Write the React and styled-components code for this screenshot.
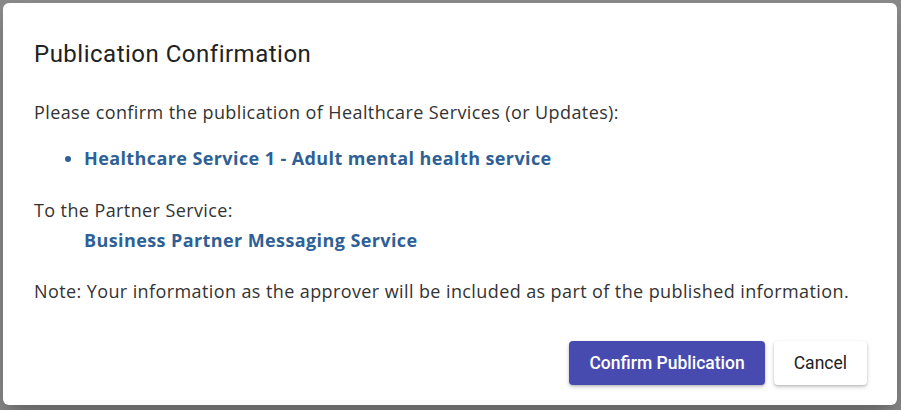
import React from "react";
import styled, { createGlobalStyle } from "styled-components";

const GlobalStyle = createGlobalStyle`
  html, body { margin: 0; padding: 0; }
  body { background: #8a8a8a; width: 901px; height: 410px; overflow: hidden; }
`;

const Backdrop = styled.div`
  width: 901px;
  height: 410px;
  box-sizing: border-box;
  padding: 3px 4px 5px 3px;
  display: flex;
`;

const Dialog = styled.div`
  flex: 1;
  background: #fff;
  border-radius: 6px;
  box-shadow: 0 11px 15px -7px rgba(0,0,0,0.2), 0 24px 38px 3px rgba(0,0,0,0.14);
  display: flex;
  flex-direction: column;
  padding: 0 30px 0 31px;
`;

const Title = styled.h2`
  margin: 0;
  padding-top: 37px;
  font-family: Roboto, sans-serif;
  font-weight: 400;
  font-size: 24px;
  line-height: 28px;
  letter-spacing: 0.5px;
  color: #222;
`;

const Text = styled.p`
  margin: ${p => p.$top || 0}px 0 0;
  font-family: "Open Sans", sans-serif;
  font-size: 18px;
  line-height: 26px;
  letter-spacing: 0.4px;
  color: #333;
`;

const List = styled.ul`
  margin: 20px 0 0;
  padding-left: 50px;
  font-family: "Open Sans", sans-serif;
  font-size: 18px;
  line-height: 26px;
  letter-spacing: 0.4px;
  color: #2e5f95;
  li::marker { color: #2e5f95; }
`;

const Strong = styled.span`
  font-weight: 700;
  color: #2e5f95;
  display: block;
  padding-left: ${p => p.$indent || 0}px;
`;

const Actions = styled.div`
  margin-top: auto;
  padding-bottom: 20px;
  display: flex;
  justify-content: flex-end;
  gap: 9px;
`;

const Button = styled.button`
  height: 44px;
  border: none;
  border-radius: 4px;
  padding: 0 20px;
  font-family: Roboto, sans-serif;
  font-size: 17.5px;
  font-weight: ${p => (p.$primary ? 500 : 400)};
  background: ${p => (p.$primary ? "#474bb0" : "#fff")};
  color: ${p => (p.$primary ? "#fff" : "#222")};
  box-shadow: 0 2px 4px rgba(0,0,0,0.2), 0 1px 2px rgba(0,0,0,0.12);
  cursor: pointer;
`;

export default function App() {
  return (
    <>
      <GlobalStyle />
      <Backdrop>
        <Dialog role="dialog">
          <Title>Publication Confirmation</Title>
          <Text $top={31}>Please confirm the publication of Healthcare Services (or Updates):</Text>
          <List>
            <li><Strong>Healthcare Service 1 - Adult mental health service</Strong></li>
          </List>
          <Text $top={26}>To the Partner Service:</Text>
          <Text $top={4}><Strong $indent={50}>Business Partner Messaging Service</Strong></Text>
          <Text $top={25}>Note: Your information as the approver will be included as part of the published information.</Text>
          <Actions>
            <Button $primary>Confirm Publication</Button>
            <Button>Cancel</Button>
          </Actions>
        </Dialog>
      </Backdrop>
    </>
  );
}
